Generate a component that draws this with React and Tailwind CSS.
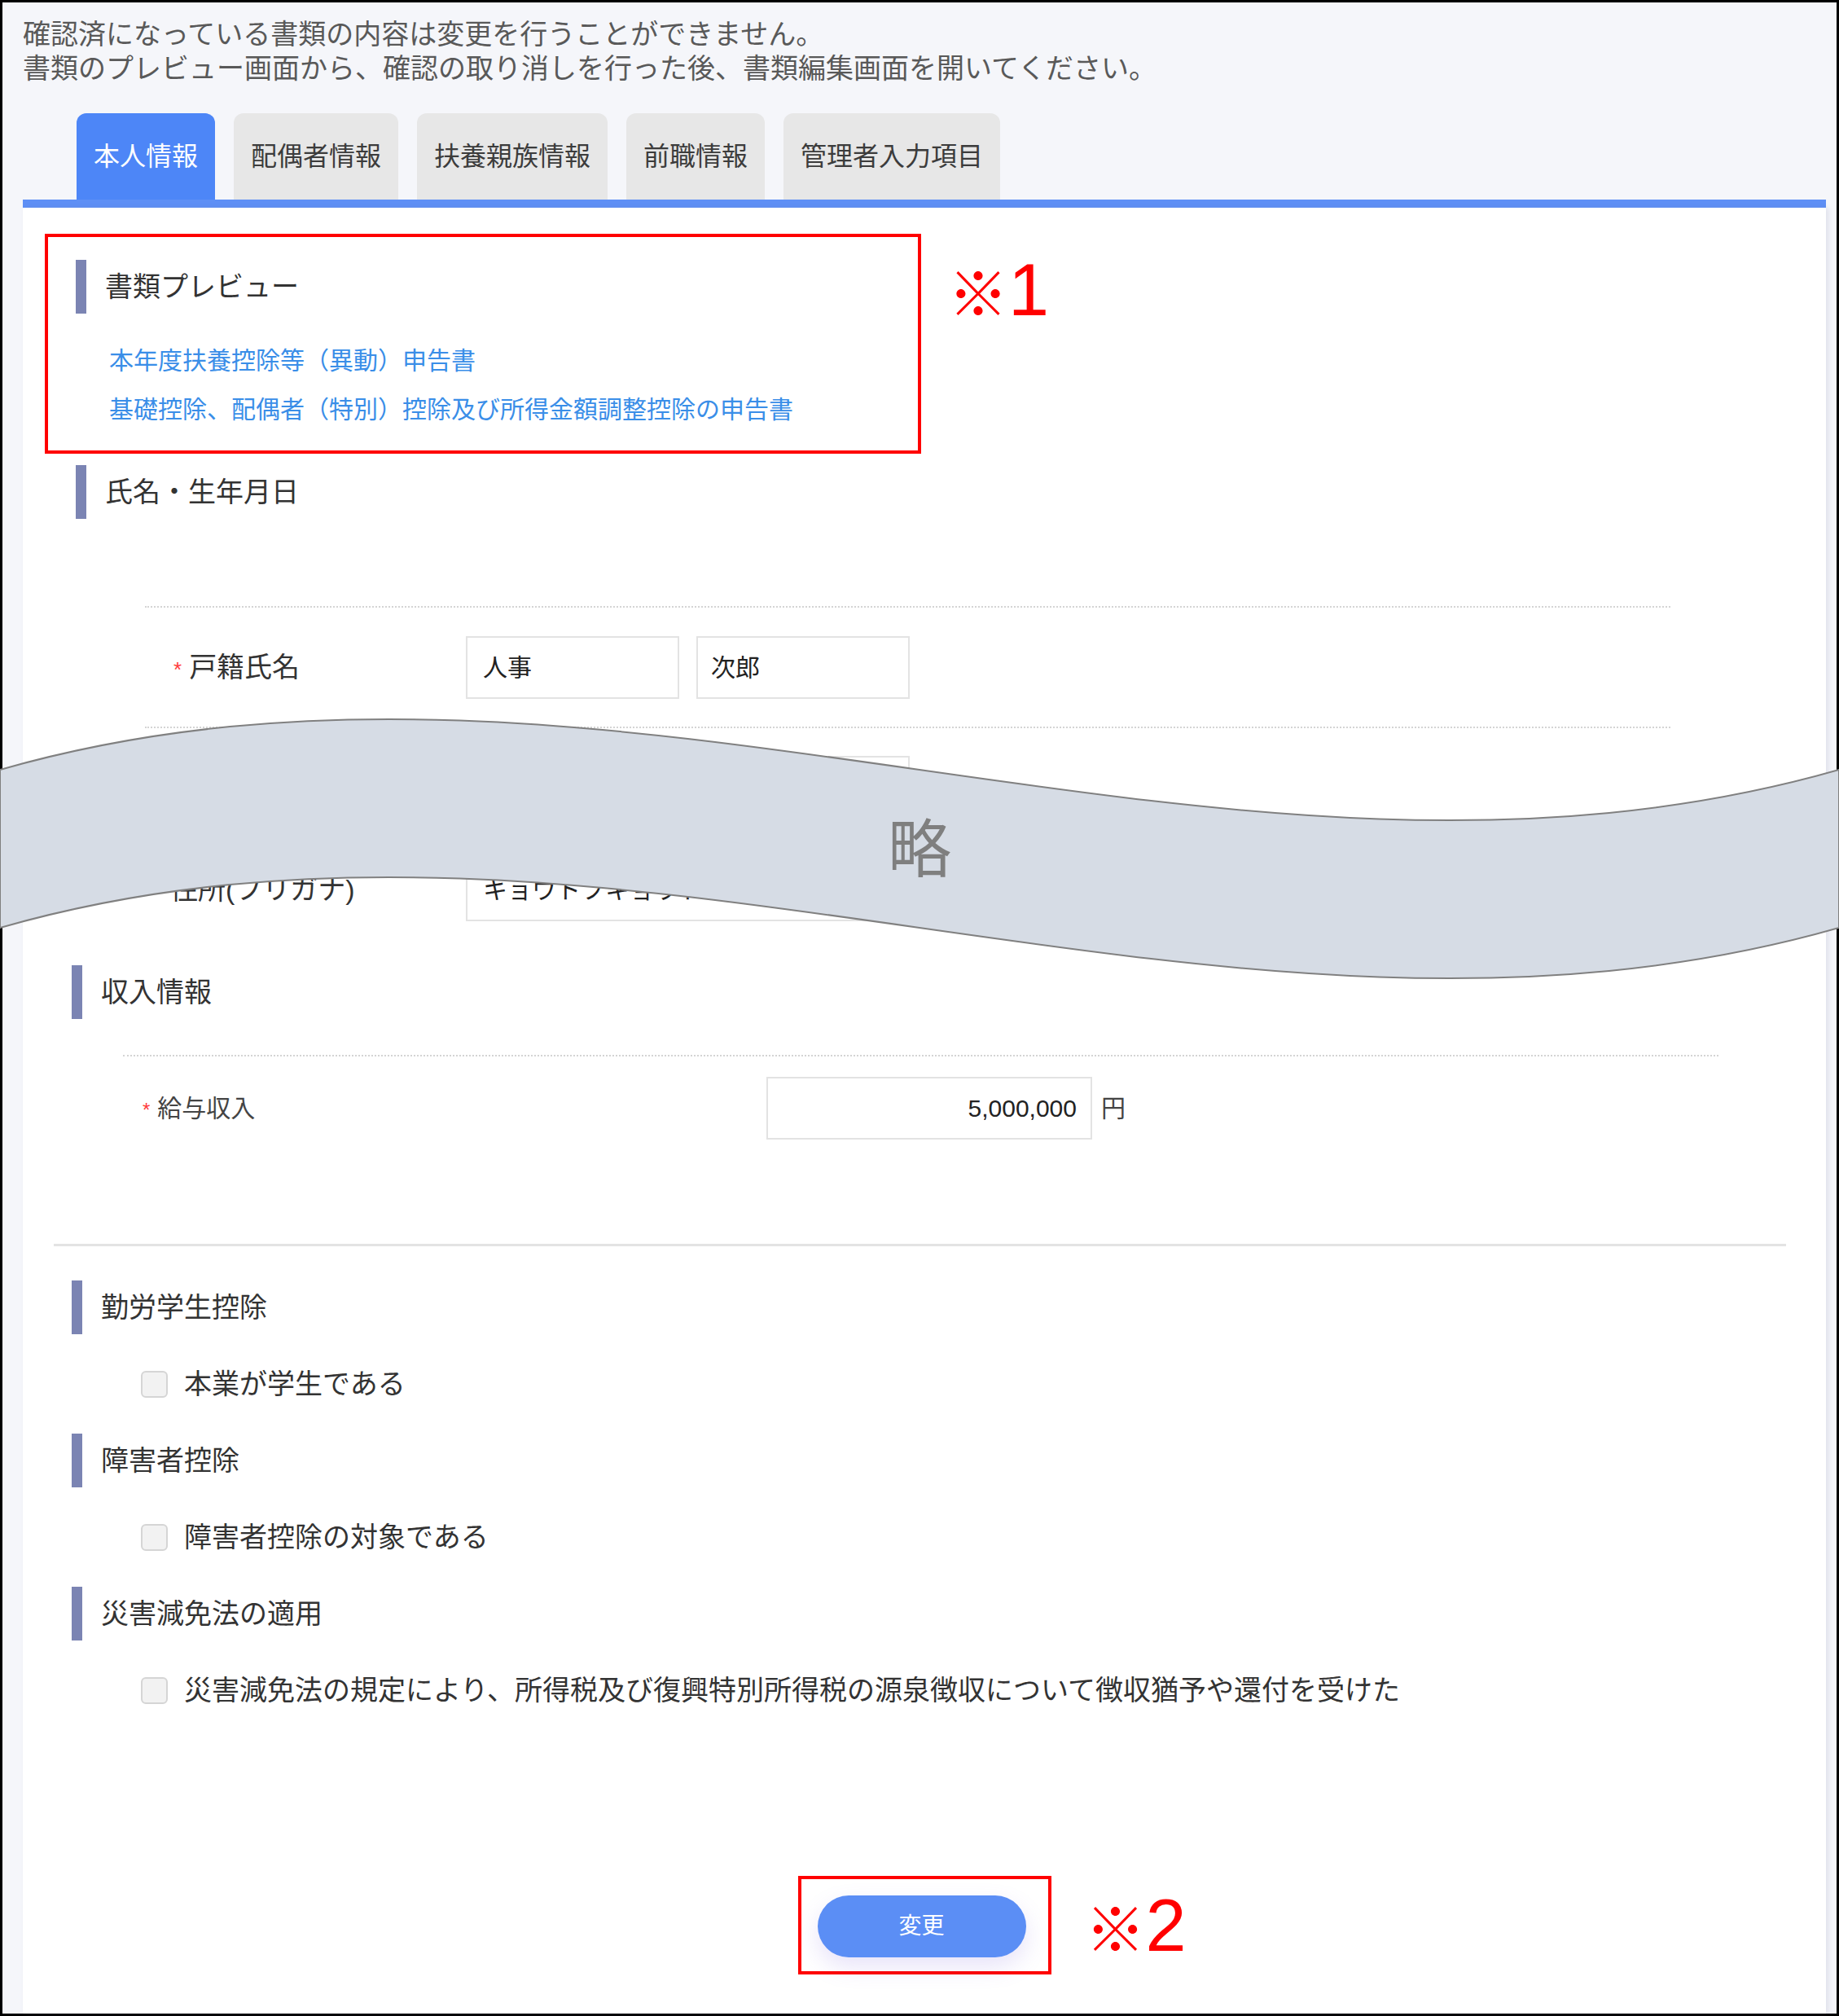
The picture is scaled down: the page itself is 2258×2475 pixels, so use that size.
import React from "react";

const tabs = ["本人情報", "配偶者情報", "扶養親族情報", "前職情報", "管理者入力項目"];

const SectionTitle = ({ children }) => (
  <div className="flex h-[66px] items-center">
    <div className="h-full w-[13px] bg-[#7b84b3]" />
    <span className="ml-[23px] text-[34px] leading-none text-[#333]">{children}</span>
  </div>
);

const Star = ({ size = "text-[26px]" }) => (
  <span className={`mr-[9px] ${size} text-[#ff3b3b]`}>*</span>
);

const TextBox = ({ value, className = "" }) => (
  <div
    className={`flex h-[77px] items-center border-2 border-[#e3e3e3] bg-white text-[30px] text-[#222] ${className}`}
  >
    {value}
  </div>
);

const FormRow = ({ label, required, height = "h-[148px]", labelPad = "pl-[35px]", children }) => (
  <div className={`flex ${height} items-center border-t-2 border-dotted border-[#d4d4d4]`}>
    <div className={`flex w-[394px] items-baseline ${labelPad} text-[34px] text-[#333]`}>
      {required && <Star />}
      {label}
    </div>
    <div className="flex gap-[21px]">{children}</div>
  </div>
);

const CheckRow = ({ children }) => (
  <div className="ml-[145px] mt-[28px] flex h-[66px] items-center">
    <div className="h-[33px] w-[33px] rounded-[6px] border-2 border-[#d5d5d5] bg-[#f2f2f2]" />
    <span className="ml-[20px] text-[34px] text-[#333]">{children}</span>
  </div>
);

const Note = ({ children, className = "" }) => (
  <div className={`absolute left-full flex items-center leading-none text-[#ff0000] ${className}`}>
    <span className="font-['Noto_Sans_CJK_JP',sans-serif] text-[74px]">※</span>
    <span className="font-['Liberation_Sans',sans-serif] text-[90px]">{children}</span>
  </div>
);

export default function App() {
  return (
    <div className="relative flex h-[2475px] w-[2258px] flex-col border-[3px] border-black bg-[#f5f6fa] font-['Liberation_Sans','Noto_Sans_CJK_JP',sans-serif]">
      {/* 上部のお知らせ */}
      <div className="pl-[25px] pr-[13px] pt-[18px] text-[34px] leading-[42px] text-[#595959]">
        <p>確認済になっている書類の内容は変更を行うことができません。</p>
        <p>書類のプレビュー画面から、確認の取り消しを行った後、書類編集画面を開いてください。</p>
      </div>

      <div className="flex flex-1 flex-col pl-[25px] pr-[13px]">
        {/* タブ */}
        <div className="ml-[66px] mt-[34px] flex h-[106px] gap-[23px]">
          {tabs.map((tab, i) => (
            <div
              key={tab}
              className={
                i === 0
                  ? "flex items-center rounded-t-[12px] bg-[#4d86f7] px-[21px] text-[32px] text-white"
                  : "flex items-center rounded-t-[12px] bg-[#e7e7e7] px-[21px] text-[32px] text-[#3c3c3c]"
              }
            >
              {tab}
            </div>
          ))}
        </div>
        <div className="h-[10px] bg-[#5e8ff5]" />

        {/* 本体パネル */}
        <div className="flex flex-1 flex-col bg-white pt-[32px] shadow-[3px_0_6px_rgba(120,130,170,0.18)]">
          {/* 書類プレビュー */}
          <div className="relative ml-[27px] w-[1076px] border-4 border-[#ff0000] pb-[20px] pl-[34px] pt-[28px]">
            <SectionTitle>書類プレビュー</SectionTitle>
            <div className="ml-[41px] mt-[28px] text-[30px] leading-[60px] text-[#3a8ee8]">
              <p>本年度扶養控除等（異動）申告書</p>
              <p>基礎控除、配偶者（特別）控除及び所得金額調整控除の申告書</p>
            </div>
            <Note className="top-[20px] ml-[37px]">1</Note>
          </div>

          {/* 氏名・生年月日 */}
          <div className="ml-[65px] mt-[14px]">
            <SectionTitle>氏名・生年月日</SectionTitle>
          </div>
          <div className="ml-[150px] mt-[107px] w-[1873px]">
            <FormRow label="戸籍氏名" required>
              <TextBox value="人事" className="w-[262px] pl-[19px]" />
              <TextBox value="次郎" className="w-[262px] pl-[16px]" />
            </FormRow>
            <div className="flex h-[126px] items-start border-t-2 border-dotted border-[#d4d4d4] pt-[34px]">
              <div className="flex w-[394px] items-baseline pl-[35px] pt-[18px] text-[34px] text-[#333]">
                <Star />
                フリガナ
              </div>
              <div className="flex gap-[21px]">
                <TextBox value="ジンジ" className="w-[262px] pl-[19px]" />
                <TextBox value="ジロウ" className="w-[262px] pl-[16px]" />
              </div>
            </div>
            <div className="flex h-[148px] items-center">
              <div className="w-[394px] pl-[31px] text-[34px] text-[#333]">住所(フリガナ)</div>
              <TextBox value="キョウトフキョウトシナカギョウク" className="w-[820px] pl-[19px]" />
            </div>
          </div>

          {/* 収入情報 */}
          <div className="ml-[60px] mt-[19px]">
            <SectionTitle>収入情報</SectionTitle>
          </div>
          <div className="ml-[123px] mt-[44px] flex h-[128px] w-[1959px] items-center border-t-2 border-dotted border-[#d4d4d4]">
            <div className="flex w-[790px] items-baseline pl-[24px] text-[30px] text-[#444]">
              <Star size="text-[24px]" />
              給与収入
            </div>
            <TextBox value="5,000,000" className="w-[400px] justify-end pr-[17px]" />
            <span className="ml-[11px] text-[30px] text-[#444]">円</span>
          </div>
          <div className="ml-[38px] mt-[104px] h-[3px] w-[2127px] bg-[#e3e3e3]" />

          {/* 控除 */}
          <div className="ml-[60px] mt-[42px]">
            <SectionTitle>勤労学生控除</SectionTitle>
          </div>
          <CheckRow>本業が学生である</CheckRow>
          <div className="ml-[60px] mt-[28px]">
            <SectionTitle>障害者控除</SectionTitle>
          </div>
          <CheckRow>障害者控除の対象である</CheckRow>
          <div className="ml-[60px] mt-[28px]">
            <SectionTitle>災害減免法の適用</SectionTitle>
          </div>
          <CheckRow>
            災害減免法の規定により、所得税及び復興特別所得税の源泉徴収について徴収猶予や還付を受けた
          </CheckRow>

          {/* 変更ボタン */}
          <div className="mt-[195px] flex justify-center">
            <div className="relative border-4 border-[#ff0000] pb-[17px] pl-[20px] pr-[27px] pt-[20px]">
              <button className="flex h-[76px] w-[256px] items-center justify-center rounded-full bg-[#5b8ef5] text-[28px] text-white shadow-[0_12px_28px_rgba(130,100,220,0.18)]">
                変更
              </button>
              <Note className="top-[12px] ml-[46px]">2</Note>
            </div>
          </div>
        </div>
      </div>

      {/* 省略の波 */}
      <svg
        className="pointer-events-none absolute left-[-3px] top-[-3px]"
        width="2258"
        height="2475"
        viewBox="0 0 2258 2475"
      >
        <path
          d="M 0 945 C 753 730, 1505 1160, 2258 945 L 2258 1139 C 1505 1354, 753 924, 0 1139 Z"
          fill="#d6dce5"
          stroke="#808080"
          strokeWidth="2"
        />
      </svg>
      <div className="pointer-events-none absolute left-[1126px] top-[1034px] -translate-x-1/2 -translate-y-1/2 font-['Noto_Sans_CJK_JP',sans-serif] text-[78px] leading-none text-[#7f7f7f]">
        略
      </div>
    </div>
  );
}
